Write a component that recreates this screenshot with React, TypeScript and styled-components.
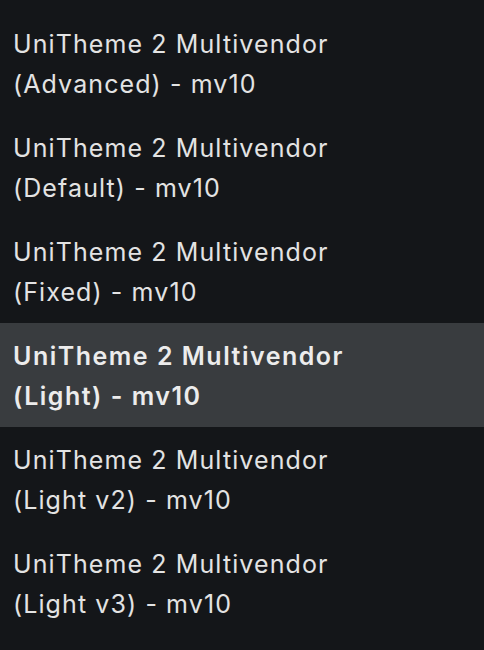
import React from "react";
import styled, { createGlobalStyle } from "styled-components";

const Global = createGlobalStyle`
  html, body { margin: 0; padding: 0; background: #141619; }
  body { font-family: Inter, "Noto Sans", sans-serif; }
`;

const List = styled.ul`
  list-style: none;
  margin: 0;
  padding: 11px 0 15px;
  background: #141619;
  min-height: 650px;
  box-sizing: border-box;
`;

const Item = styled.li<{ $active?: boolean }>`
  padding: 13px 13px 11px;
  font-size: 25px;
  line-height: 40px;
  color: ${(p) => (p.$active ? "#ececec" : "#e3e3e3")};
  font-weight: ${(p) => (p.$active ? 600 : 400)};
  background: ${(p) => (p.$active ? "#393c3f" : "transparent")};
  letter-spacing: ${(p) => (p.$active ? "1.5px" : "1.1px")};
`;

const items = [
  "(Advanced)",
  "(Default)",
  "(Fixed)",
  "(Light)",
  "(Light v2)",
  "(Light v3)",
];

export default function App() {
  return (
    <>
      <Global />
      <List>
        {items.map((s) => (
          <Item key={s} $active={s === "(Light)"}>
            UniTheme 2 Multivendor
            <br />
            {s} - mv10
          </Item>
        ))}
      </List>
    </>
  );
}
